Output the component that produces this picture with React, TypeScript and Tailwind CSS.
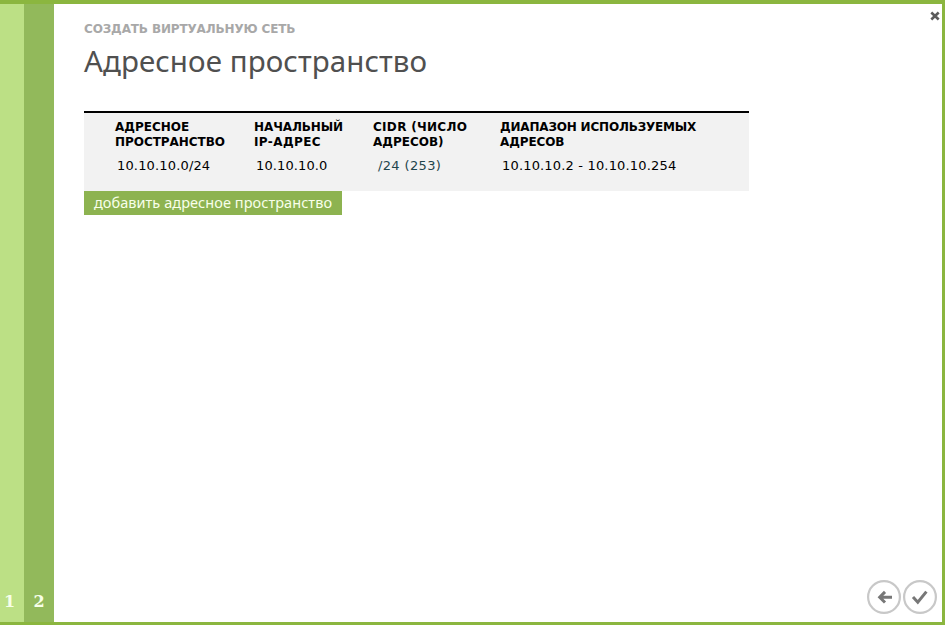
import React from 'react';

interface Column {
  id: string;
  header: string[];
  value: string;
  cellClass: string;
  headerClass: string[];
  valueClass: string;
}

const columns: Column[] = [
  {
    id: 'space',
    header: ['АДРЕСНОЕ', 'ПРОСТРАНСТВО'],
    value: '10.10.10.0/24',
    cellClass: 'w-[139px]',
    headerClass: ['tracking-normal', 'tracking-[-0.05px]'],
    valueClass: 'pl-0.5 tracking-[0.16px]'
  },
  {
    id: 'start',
    header: ['НАЧАЛЬНЫЙ', 'IP-АДРЕС'],
    value: '10.10.10.0',
    cellClass: 'w-[119px]',
    headerClass: ['tracking-[-0.1px]', 'tracking-[0.4px]'],
    valueClass: 'pl-0.5 tracking-[0.12px]'
  },
  {
    id: 'cidr',
    header: ['CIDR (ЧИСЛО', 'АДРЕСОВ)'],
    value: '/24 (253)',
    cellClass: 'w-[127px]',
    headerClass: ['tracking-[0.3px]', 'tracking-normal'],
    valueClass: 'pl-[5px] tracking-[0.36px] text-[#1f454c]'
  },
  {
    id: 'range',
    header: ['ДИАПАЗОН ИСПОЛЬЗУЕМЫХ', 'АДРЕСОВ'],
    value: '10.10.10.2 - 10.10.10.254',
    cellClass: 'w-[249px]',
    headerClass: ['tracking-[-0.19px]', 'tracking-[-0.1px]'],
    valueClass: 'pl-0.5 tracking-[0.17px]'
  }
];

const Steps: React.FC = () => (
  <nav className="flex shrink-0 items-stretch font-['DejaVu_Serif',serif] text-[16px] leading-5 font-bold text-[#f7ffe8]">
    <div className="flex w-6 items-end pb-[10px] pl-1 bg-[#bce085]">1</div>
    <div className="flex w-[30px] items-end justify-center pb-[10px] bg-[#92b95b]">2</div>
  </nav>
);

const AddressTable: React.FC = () => (
  <table className="w-[665px] table-fixed border-t-2 border-black bg-[#f2f2f2] text-left text-black">
    <thead>
      <tr className="h-[39px] align-top">
        <th className="w-[31px]" />
        {columns.map(column => (
          <th key={column.id} className={`${column.cellClass} pt-[7px] text-[12px] leading-[15px] font-bold whitespace-nowrap`}>
            {column.header.map((line, i) => (
              <div key={line} className={column.headerClass[i]}>{line}</div>
            ))}
          </th>
        ))}
      </tr>
    </thead>
    <tbody>
      <tr className="h-10 align-top">
        <td />
        {columns.map(column => (
          <td key={column.id} className={`pt-[5px] text-[13px] leading-5 whitespace-nowrap ${column.valueClass}`}>
            {column.value}
          </td>
        ))}
      </tr>
    </tbody>
  </table>
);

const App: React.FC = () => {
  return (
    <div className="flex h-[625px] w-[945px] overflow-hidden border-t-4 border-r-[3px] border-b-[3px] border-[#8bb63f] bg-white font-['DejaVu_Sans',sans-serif]">
      <Steps />
      <main className="flex flex-1 flex-col pl-[30px]">
        <header className="flex justify-between">
          <div>
            <div className="pt-4 text-[12px] leading-[18px] font-bold tracking-[-0.14px] text-[#a8a8a8]">СОЗДАТЬ ВИРТУАЛЬНУЮ СЕТЬ</div>
            <h1 className="pt-[5px] font-['Noto_Sans',sans-serif] text-[29.5px] leading-9 tracking-[0.08px] text-[#505050]">Адресное пространство</h1>
          </div>
          <button type="button" aria-label="Закрыть" className="mt-[7px] mr-[2px] h-[10px] w-[10px]">
            <svg viewBox="0 0 10 10" className="h-[10px] w-[10px]" fill="none" stroke="#5b5b5b" strokeWidth="2.6">
              <path d="M1.3 1.5 8.7 8.5M8.7 1.5 1.3 8.5" />
            </svg>
          </button>
        </header>
        <section className="mt-8">
          <AddressTable />
          <button type="button" className="block h-6 w-[258px] bg-[#8db350] text-center font-['Noto_Sans',sans-serif] text-[14.5px] leading-[22px] tracking-[0.06px] whitespace-nowrap text-[#f8ffea]">
            <span className="block h-6">добавить адресное пространство</span>
          </button>
        </section>
        <footer className="mt-auto flex justify-end gap-[2px] pr-[5px] pb-2">
          <button type="button" aria-label="Назад">
            <svg viewBox="0 0 34 34" className="h-[34px] w-[34px]" fill="none">
              <circle cx="17" cy="17" r="15.9" stroke="#c8c8c8" strokeWidth="2.2" />
              <path d="M25 17.2H13M18 11.9 12.7 17.2l5.3 5.3" stroke="#777777" strokeWidth="3" />
            </svg>
          </button>
          <button type="button" aria-label="Готово">
            <svg viewBox="0 0 34 34" className="h-[34px] w-[34px]" fill="none">
              <circle cx="17" cy="17" r="15.9" stroke="#c8c8c8" strokeWidth="2.2" />
              <path d="M10 17 14.8 22.2 23.4 11.6" stroke="#777777" strokeWidth="3" />
            </svg>
          </button>
        </footer>
      </main>
    </div>
  );
};

export default App;
